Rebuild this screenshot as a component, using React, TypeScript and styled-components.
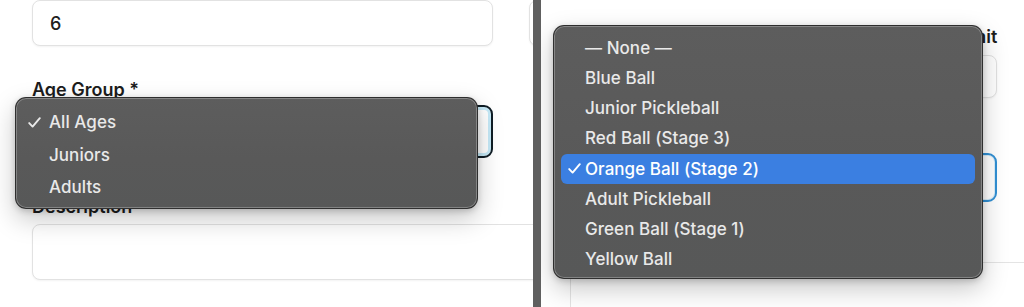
import React from "react";
import styled, { createGlobalStyle } from "styled-components";

const GlobalStyle = createGlobalStyle`
  html, body { margin: 0; padding: 0; background: #fff; }
  body {
    font-family: Inter, "Liberation Sans", Arial, sans-serif;
    -webkit-font-smoothing: antialiased;
  }
  #root { width: 1024px; height: 307px; overflow: hidden; }
  * { box-sizing: border-box; }
`;

const Stage = styled.div`
  display: flex;
  width: 1024px;
  height: 307px;
  overflow: hidden;
  background: #fff;
`;

const Panel = styled.section<{ $width?: number }>`
  position: relative;
  flex: ${(p) => (p.$width ? `0 0 ${p.$width}px` : "1 1 auto")};
  height: 100%;
  overflow: hidden;
  background: #fff;
`;

const Divider = styled.div`
  flex: 0 0 8px;
  background: #5f5f5f;
`;

const Form = styled.div<{ $cols: string; $gap: number; $padLeft: number }>`
  display: grid;
  grid-template-columns: ${(p) => p.$cols};
  column-gap: ${(p) => p.$gap}px;
  align-items: start;
  padding-left: ${(p) => p.$padLeft}px;
  width: max-content;
`;

const Label = styled.label<{ $mt: number; $span?: boolean }>`
  display: block;
  grid-column: ${(p) => (p.$span ? "1 / -1" : "auto")};
  margin-top: ${(p) => p.$mt}px;
  height: 22px;
  font-size: 18px;
  line-height: 22px;
  font-weight: 600;
  color: #1c1c1c;
  white-space: nowrap;
`;

const Field = styled.div<{ $h: number; $mt?: number; $span?: boolean; $bleed?: number }>`
  grid-column: ${(p) => (p.$span ? "1 / -1" : "auto")};
  margin-top: ${(p) => p.$mt ?? 0}px;
  margin-right: ${(p) => -(p.$bleed ?? 0)}px;
  height: ${(p) => p.$h}px;
  display: flex;
  align-items: center;
  padding-left: 17px;
  border: 1px solid #e2e2e2;
  border-radius: 8px;
  background: #fff;
  box-shadow: 0 1px 2px rgba(0, 0, 0, 0.05);
  font-size: 18px;
  font-weight: 500;
  color: #202020;
`;

const FocusedSelect = styled.div<{ $h: number; $mt: number; $tone: "dark" | "blue"; $span?: boolean }>`
  grid-column: ${(p) => (p.$span ? "1 / -1" : "auto")};
  margin-top: ${(p) => p.$mt}px;
  height: ${(p) => p.$h}px;
  border-radius: 9px;
  background: #fff;
  border: 2px solid ${(p) => (p.$tone === "dark" ? "#0f1d25" : "#3190d4")};
  box-shadow: ${(p) =>
    p.$tone === "dark" ? "inset 0 0 0 3px #c6eaf8" : "inset 0 0 0 1px #d8eefa"};
`;

const Section = styled.div<{ $mt: number; $h: number }>`
  grid-column: 1 / -1;
  margin-top: ${(p) => p.$mt}px;
  margin-right: -80px;
  height: ${(p) => p.$h}px;
  border-top: 1px solid #e4e4e4;
  border-left: 1px solid #e4e4e4;
  border-top-left-radius: 8px;
`;

const Menu = styled.div<{
  $left: number;
  $top: number;
  $width: number;
  $padTop: number;
  $padBottom: number;
}>`
  position: absolute;
  left: ${(p) => p.$left}px;
  top: ${(p) => p.$top}px;
  width: ${(p) => p.$width}px;
  padding: ${(p) => `${p.$padTop}px 7px ${p.$padBottom}px`};
  background: linear-gradient(180deg, #5d5d5d 0%, #595959 55%, #575858 100%);
  border: 1px solid rgba(25, 25, 25, 0.65);
  border-radius: 11px;
  box-shadow: inset 0 0 0 1px rgba(255, 255, 255, 0.26), 0 10px 26px rgba(0, 0, 0, 0.22),
    0 2px 6px rgba(0, 0, 0, 0.18);
`;

const Row = styled.div<{ $h: number; $checkLeft: number; $active?: boolean }>`
  display: flex;
  align-items: center;
  height: ${(p) => p.$h}px;
  padding-left: ${(p) => p.$checkLeft}px;
  border-radius: 6px;
  background: ${(p) => (p.$active ? "#3b7fe1" : "transparent")};
  color: ${(p) => (p.$active ? "#ffffff" : "#e9e9e9")};
  font-size: 17px;
  font-weight: 500;
  letter-spacing: 0.05px;
  white-space: nowrap;
`;

const CheckSlot = styled.span<{ $w: number }>`
  flex: 0 0 ${(p) => p.$w}px;
  display: flex;
  align-items: center;
`;

const Check = () => (
  <svg width="13" height="11" viewBox="0 0 13 11" fill="none">
    <path
      d="M1.2 6.1 L4.6 9.6 L11.8 1.2"
      stroke="currentColor"
      strokeWidth="1.9"
      strokeLinecap="round"
      strokeLinejoin="round"
    />
  </svg>
);

type MenuProps = {
  items: string[];
  selected: string;
  highlight?: boolean;
  rowH: number;
  checkLeft: number;
  textLeft: number;
  left: number;
  top: number;
  width: number;
  padTop: number;
  padBottom: number;
};

const PopupMenu = ({ items, selected, highlight, rowH, checkLeft, textLeft, ...box }: MenuProps) => (
  <Menu
    $left={box.left}
    $top={box.top}
    $width={box.width}
    $padTop={box.padTop}
    $padBottom={box.padBottom}
  >
    {items.map((it) => (
      <Row key={it} $h={rowH} $checkLeft={checkLeft} $active={highlight && it === selected}>
        <CheckSlot $w={textLeft - checkLeft}>{it === selected ? <Check /> : null}</CheckSlot>
        {it}
      </Row>
    ))}
  </Menu>
);

const levels = [
  "— None —",
  "Blue Ball",
  "Junior Pickleball",
  "Red Ball (Stage 3)",
  "Orange Ball (Stage 2)",
  "Adult Pickleball",
  "Green Ball (Stage 1)",
  "Yellow Ball",
];

export default function App() {
  return (
    <>
      <GlobalStyle />
      <Stage>
        <Panel $width={533}>
          <Form $cols="461px 200px" $gap={36} $padLeft={32}>
            <Field $h={46}>6</Field>
            <Field $h={46} />
            <Label $mt={33}>Age Group *</Label>
            <span />
            <FocusedSelect $h={53} $mt={4} $tone="dark" />
            <span />
            <Label $mt={38} $span>
              Description
            </Label>
            <Field $h={56} $mt={6} $span $bleed={60} />
          </Form>
          <PopupMenu
            items={["All Ages", "Juniors", "Adults"]}
            selected="All Ages"
            rowH={32.5}
            checkLeft={5}
            textLeft={26}
            left={15}
            top={97}
            width={463}
            padTop={8}
            padBottom={4}
          />
        </Panel>
        <Divider />
        <Panel>
          <Form $cols="262px 141px" $gap={24} $padLeft={29}>
            <Label $mt={26} />
            <Label $mt={26}>Participant Limit</Label>
            <Field $h={43} $mt={7} />
            <Field $h={43} $mt={7} />
            <Label $mt={22} $span />
            <FocusedSelect $h={49} $mt={11} $tone="blue" $span />
            <Section $mt={60} $h={60} />
          </Form>
          <PopupMenu
            items={levels}
            selected="Orange Ball (Stage 2)"
            highlight
            rowH={30.125}
            checkLeft={7}
            textLeft={24}
            left={12}
            top={25}
            width={430}
            padTop={7}
            padBottom={4}
          />
        </Panel>
      </Stage>
    </>
  );
}
